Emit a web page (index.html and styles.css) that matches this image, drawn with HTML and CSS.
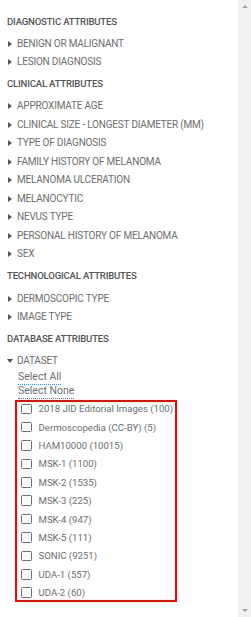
FILE: index.html
```html
<!DOCTYPE html>
<html lang="en">
<head>
    <meta charset="UTF-8">
    <title>Attribute Filters</title>
    <link rel="stylesheet" href="styles.css">
</head>
<body>
    <div class="frame">
        <div class="panel">
            <!-- Diagnostic -->
            <h2 class="group-title">Diagnostic Attributes</h2>
            <ul class="facets">
                <li class="facet">Benign or Malignant</li>
                <li class="facet">Lesion Diagnosis</li>
            </ul>

            <!-- Clinical -->
            <h2 class="group-title">Clinical Attributes</h2>
            <ul class="facets">
                <li class="facet">Approximate Age</li>
                <li class="facet">Clinical Size - Longest Diameter (mm)</li>
                <li class="facet">Type of Diagnosis</li>
                <li class="facet">Family History of Melanoma</li>
                <li class="facet">Melanoma Ulceration</li>
                <li class="facet">Melanocytic</li>
                <li class="facet">Nevus Type</li>
                <li class="facet">Personal History of Melanoma</li>
                <li class="facet">Sex</li>
            </ul>

            <!-- Technological -->
            <h2 class="group-title">Technological Attributes</h2>
            <ul class="facets">
                <li class="facet">Dermoscopic Type</li>
                <li class="facet">Image Type</li>
            </ul>

            <!-- Database -->
            <h2 class="group-title">Database Attributes</h2>
            <ul class="facets">
                <li class="facet open">Dataset</li>
            </ul>
            <div class="select-links">
                <span class="select-link">Select All</span>
                <span class="select-link">Select None</span>
            </div>
            <ul class="options">
                <li class="option"><span class="box"></span>2018 JID Editorial Images (100)</li>
                <li class="option"><span class="box"></span>Dermoscopedia (CC-BY) (5)</li>
                <li class="option"><span class="box"></span>HAM10000 (10015)</li>
                <li class="option"><span class="box"></span>MSK-1 (1100)</li>
                <li class="option"><span class="box"></span>MSK-2 (1535)</li>
                <li class="option"><span class="box"></span>MSK-3 (225)</li>
                <li class="option"><span class="box"></span>MSK-4 (947)</li>
                <li class="option"><span class="box"></span>MSK-5 (111)</li>
                <li class="option"><span class="box"></span>SONIC (9251)</li>
                <li class="option"><span class="box"></span>UDA-1 (557)</li>
                <li class="option"><span class="box"></span>UDA-2 (60)</li>
            </ul>
        </div>

        <div class="scrollbar">
            <span class="arrow up"></span>
            <span class="arrow down"></span>
        </div>
    </div>
</body>
</html>
```

FILE: styles.css
```css
* {
    margin: 0;
    padding: 0;
    box-sizing: border-box;
}

body {
    font-family: Roboto, "Liberation Sans", sans-serif;
    background: #fff;
}

.frame {
    display: flex;
    height: 617px;
    overflow: hidden;
}

.panel {
    flex: 1;
    padding: 9px 0 0 7px;
}

.group-title {
    font-size: 9.6px;
    font-weight: 500;
    color: #555;
    text-transform: uppercase;
    line-height: 18.5px;
    padding: 3.6px 0;
    letter-spacing: -0.2px;
}

.facets {
    list-style: none;
}

.facet {
    position: relative;
    font-size: 10px;
    color: #6e6e6e;
    text-transform: uppercase;
    line-height: 18.5px;
    padding-left: 10px;
    letter-spacing: -0.2px;
}

.facet::before {
    content: "";
    position: absolute;
    left: 1px;
    top: 6px;
    border-left: 4px solid #555;
    border-top: 3px solid transparent;
    border-bottom: 3px solid transparent;
}

.facet.open::before {
    left: 0;
    top: 7px;
    border-top: 4px solid #555;
    border-left: 3px solid transparent;
    border-right: 3px solid transparent;
    border-bottom: none;
}

.select-links {
    display: flex;
    flex-direction: column;
    align-items: flex-start;
    padding-left: 11px;
}

.select-link {
    display: block;
    height: 14px;
    font-size: 10.5px;
    color: #6e6e6e;
    line-height: 12px;
    border-bottom: 1px dotted #2196f3;
}

.options {
    list-style: none;
    width: 162px;
    margin: 1px 0 0 8px;
    padding: 0 0 0 2px;
    border: 2px solid #f00;
    display: flex;
    flex-direction: column;
    gap: 4.4px;
}

.option {
    display: flex;
    align-items: center;
    height: 14px;
    font-size: 9.6px;
    color: #6e6e6e;
    white-space: nowrap;
}

.box {
    flex-shrink: 0;
    width: 10.5px;
    height: 10.5px;
    border: 1.5px solid #6e6e6e;
    border-radius: 1.5px;
    margin: 0 7px 0 2px;
}

.scrollbar {
    width: 13px;
    background: #f1f1f1;
    display: flex;
    flex-direction: column;
    justify-content: space-between;
    align-items: center;
    padding: 5px 0;
}

.arrow {
    width: 0;
    height: 0;
    border-left: 3px solid transparent;
    border-right: 3px solid transparent;
}

.arrow.up {
    border-bottom: 3px solid #a3a3a3;
}

.arrow.down {
    border-top: 3px solid #a3a3a3;
}
```
